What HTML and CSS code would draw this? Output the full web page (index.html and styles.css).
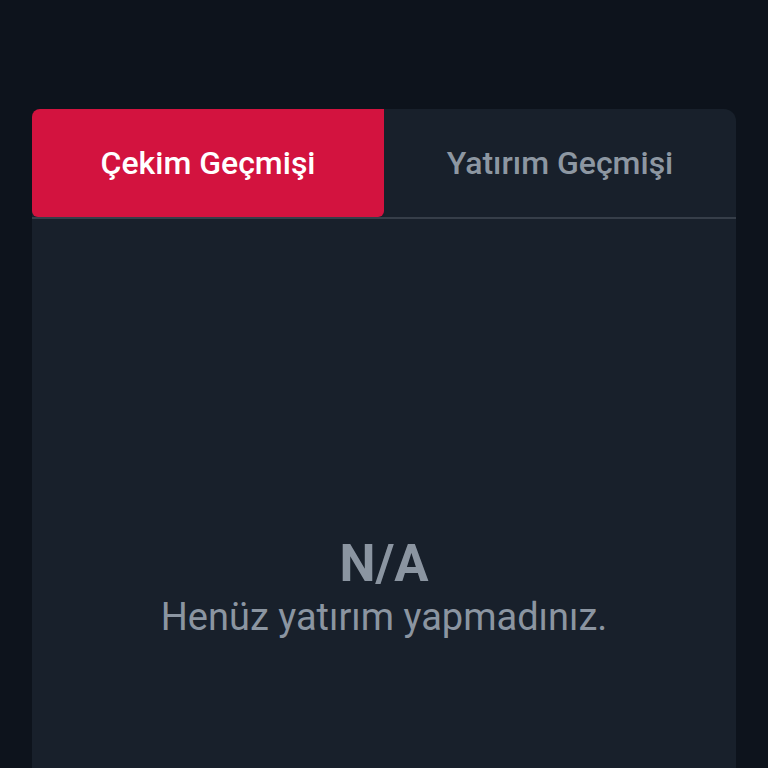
FILE: index.html
```html
<!DOCTYPE html>
<html lang="tr">

<head>
    <meta charset="UTF-8">
    <title>Geçmiş</title>
    <link rel="stylesheet" href="styles.css">
</head>

<body>
    <main>
        <section class="gecmis">
            <nav class="sekmeler">
                <button class="sekme valgt">Çekim Geçmişi</button>
                <button class="sekme">Yatırım Geçmişi</button>
            </nav>
            <div class="icerik">
                <div class="bos">
                    <h2>N/A</h2>
                    <p>Henüz yatırım yapmadınız.</p>
                </div>
            </div>
        </section>
    </main>
</body>

</html>
```

FILE: styles.css
```css
* {
    box-sizing: border-box;
    padding: 0;
    margin: 0;
}

body {
    font-family: Roboto, "Liberation Sans", sans-serif;
    background: #0d131c;
    height: 768px;
    overflow: hidden;
}

main {
    padding: 109px 32px 0;
}

.gecmis {
    background: #18202b;
    border-radius: 12px 12px 0 0;
    min-height: 700px;
}

.sekmeler {
    display: grid;
    grid-template-columns: 352px 1fr;
    border-bottom: 2px solid #363e49;
}

.sekme {
    height: 108px;
    border: none;
    background: transparent;
    font-family: inherit;
    font-size: 32px;
    font-weight: 500;
    color: #8d97a2;
}

.sekme.valgt {
    background: #d3133f;
    color: #fff;
    border-radius: 8px 0 6px 6px;
}

.icerik {
    height: 560px;
    display: flex;
    align-items: center;
    justify-content: center;
}

.bos {
    text-align: center;
    color: #8b95a1;
    padding-top: 180px;
}

.bos h2 {
    font-size: 51px;
    font-weight: 700;
    line-height: 1;
    margin-bottom: 6px;
}

.bos p {
    font-size: 38px;
    line-height: 1.2;
}
```
